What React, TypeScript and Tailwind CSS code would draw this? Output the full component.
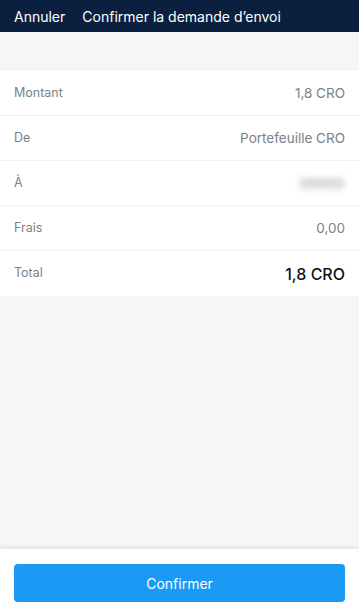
const rows = [
  { label: 'Montant', value: '1,8 CRO' },
  { label: 'De', value: 'Portefeuille CRO' },
  { label: 'À', value: '' },
  { label: 'Frais', value: '0,00' },
]

export default function App() {
  return (
    <div
      className="flex flex-col h-[616px] w-[359px] bg-[#f5f6f7] overflow-hidden"
      style={{ fontFamily: 'Inter, "Noto Sans", sans-serif' }}
    >
      <div className="flex items-center h-[32px] bg-[#0b1f3f] px-[14px] gap-[17px] text-white text-[14px]">
        <span>Annuler</span>
        <span>Confirmer la demande d’envoi</span>
      </div>

      <div className="mt-[39px] bg-white">
        {rows.map((r) => (
          <div
            key={r.label}
            className="flex items-center justify-between h-[45px] px-[14px] border-b border-[#eff0f2]"
          >
            <span className="text-[12.5px] text-[#7b818a]">{r.label}</span>
            {r.value ? (
              <span className="text-[13.5px] text-[#7b818a]">{r.value}</span>
            ) : (
              <span className="block h-[11px] w-[46px] rounded-full bg-[#d9dbde] blur-[3px]" />
            )}
          </div>
        ))}
        <div className="flex items-center justify-between h-[45px] px-[14px]">
          <span className="text-[12.5px] text-[#7b818a]">Total</span>
          <span className="text-[16px] font-medium text-[#111418]">1,8 CRO</span>
        </div>
      </div>

      <div className="flex-1" />

      <div className="bg-white h-[67px] px-[14px] pt-[15px] shadow-[0_-2px_4px_rgba(0,0,0,0.08)]">
        <button className="w-full h-[38px] rounded-[4px] bg-[#1a99f5] text-white text-[14px]">
          Confirmer
        </button>
      </div>
    </div>
  )
}
